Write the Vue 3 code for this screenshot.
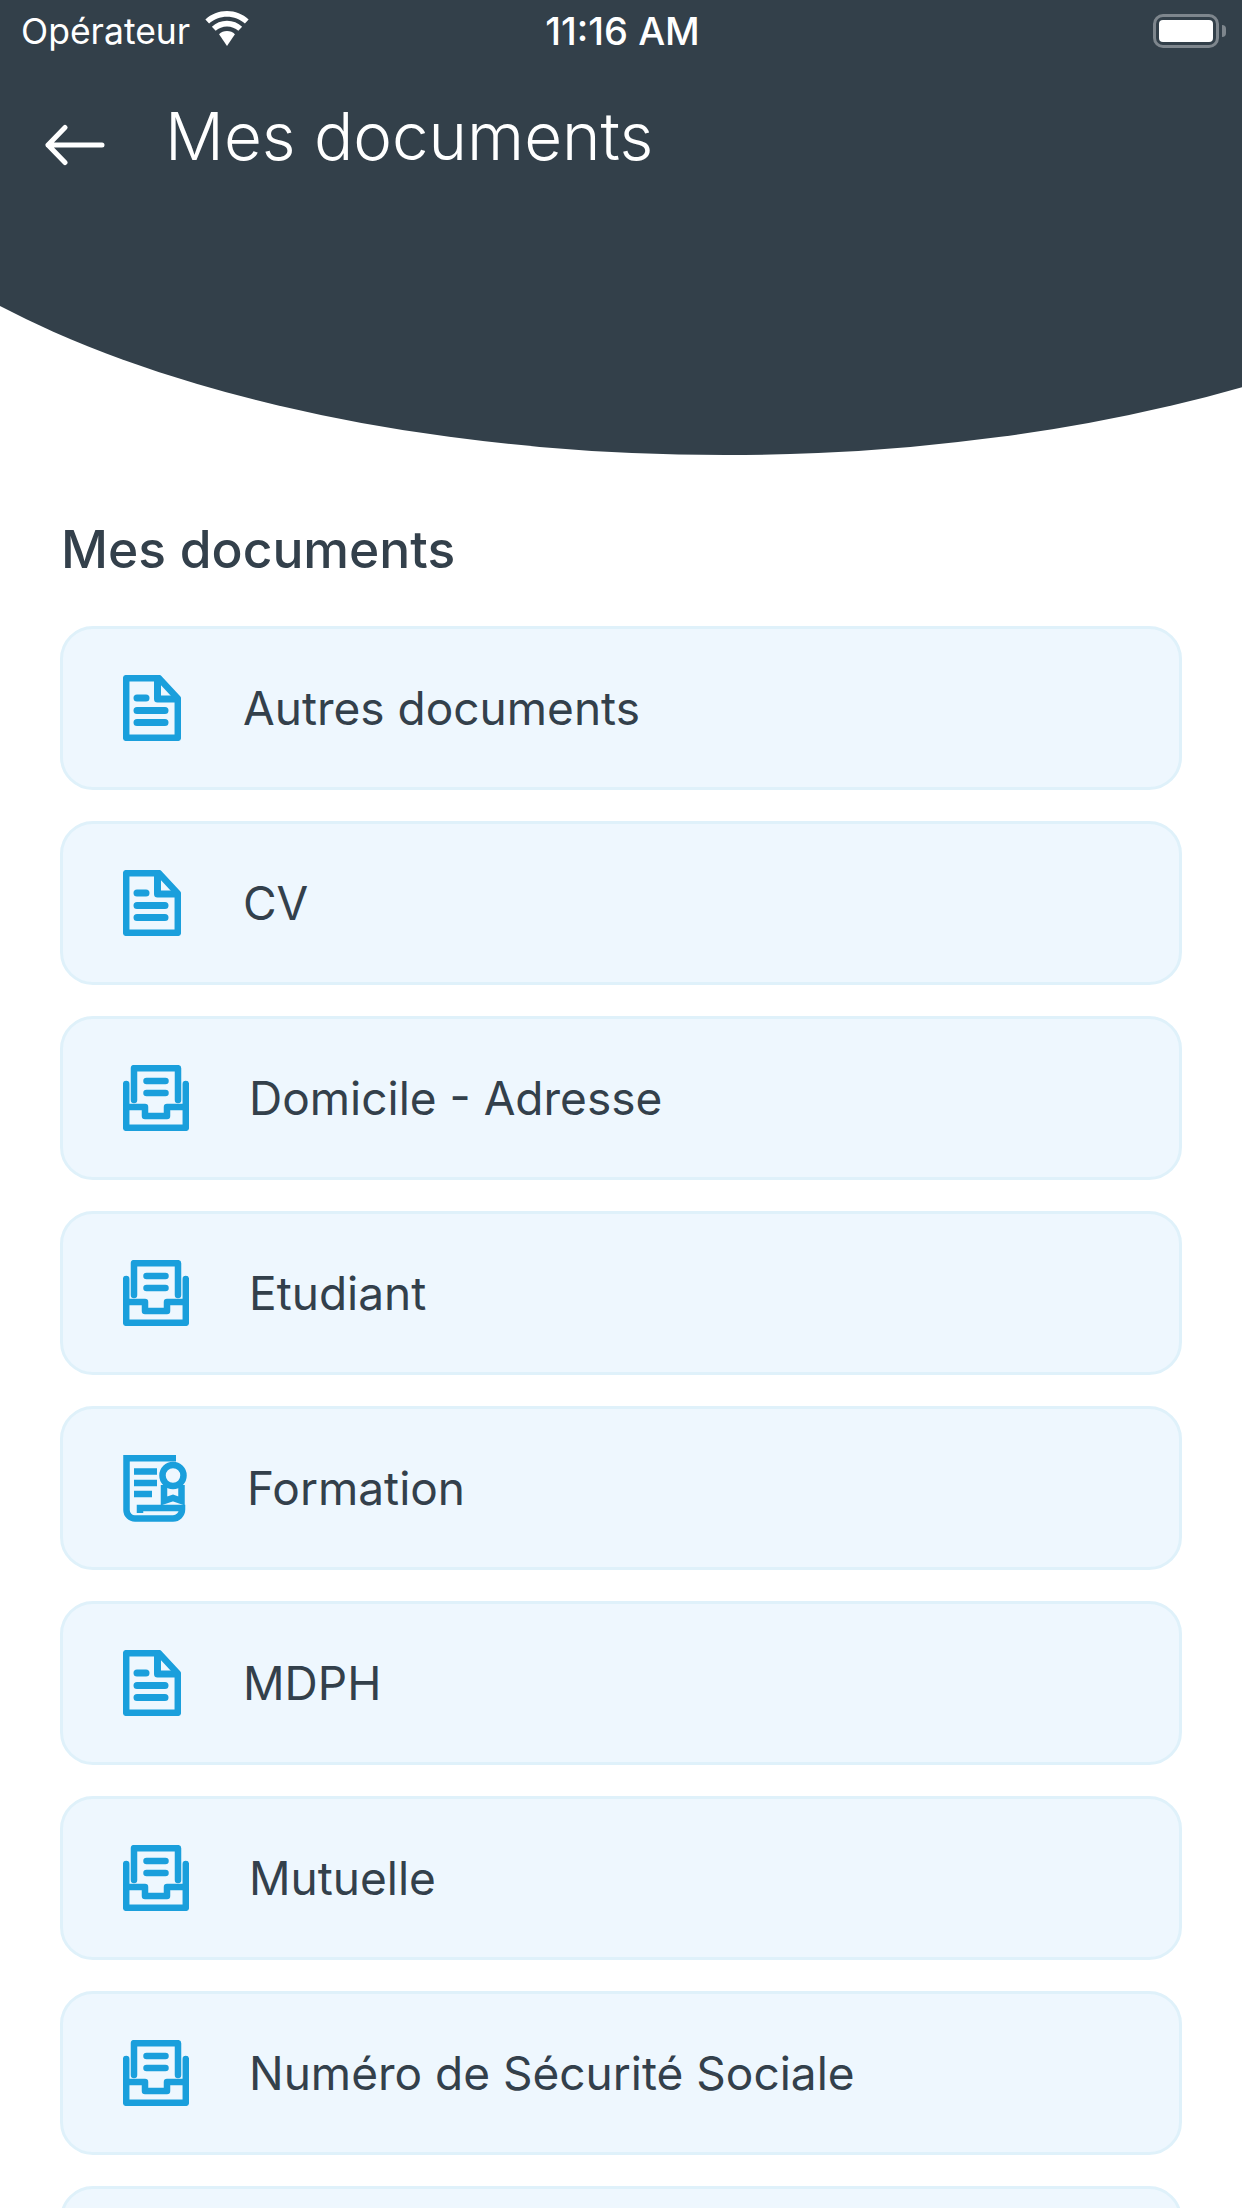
<script setup>
const items = [
  { label: 'Autres documents', icon: 'doc' },
  { label: 'CV', icon: 'doc' },
  { label: 'Domicile - Adresse', icon: 'tray' },
  { label: 'Etudiant', icon: 'tray' },
  { label: 'Formation', icon: 'cert' },
  { label: 'MDPH', icon: 'doc' },
  { label: 'Mutuelle', icon: 'tray' },
  { label: 'Numéro de Sécurité Sociale', icon: 'tray' },
  { label: '', icon: 'tray' },
]
</script>

<template>
  <div class="page">
    <header class="header">
      <svg class="curve" width="1242" height="455" viewBox="0 0 1242 455">
        <ellipse cx="725" cy="34" rx="950" ry="421" fill="#33404a" />
        <rect x="0" y="0" width="1242" height="34" fill="#33404a" />
      </svg>
      <div class="status">
        <div class="status-left">
          <span class="carrier">Opérateur</span>
          <svg class="wifi" width="48" height="35" viewBox="0 0 46 34">
            <path d="M23 5.500c6.600 0 12.700 2.500 17.400 6.700L44 8.200C38.300 3 31 0 23 0S7.700 3 2 8.200l3.600 4c4.700-4.200 10.800-6.700 17.400-6.700z" fill="#fff" />
            <path d="M23 15c4.200 0 8.100 1.600 11 4.200l3.700-4C33.800 11.600 28.700 9.500 23 9.500s-10.800 2.100-14.700 5.700l3.700 4c2.900-2.600 6.800-4.200 11-4.200z" fill="#fff" />
            <path d="M23 19.500c-3 0-5.700 1.100-7.700 3L23 34l7.700-11.500c-2-1.900-4.700-3-7.700-3z" fill="#fff" />
          </svg>
        </div>
        <span class="clock">11:16 AM</span>
        <div class="battery">
          <span class="battery-body"><span class="battery-level"></span></span>
          <span class="battery-nub"></span>
        </div>
      </div>
      <div class="title-row">
        <svg class="back" width="60" height="42" viewBox="0 0 60 42">
          <path d="M3 21H57M20 3.500 3 21l17 17.500" fill="none" stroke="#fff" stroke-width="5" stroke-linecap="round" stroke-linejoin="round" />
        </svg>
        <h1 class="title">Mes documents</h1>
      </div>
    </header>

    <main class="content">
      <h2 class="heading">Mes documents</h2>
      <ul class="list">
        <li v-for="(item, i) in items" :key="i" class="card" :class="'card-' + item.icon">
          <svg v-if="item.icon === 'doc'" class="icon" width="58" height="66" viewBox="0 0 58 66" fill="none" stroke="#1a9fdc" stroke-width="6.500" stroke-linecap="round" stroke-linejoin="round">
            <path d="M3.200 3.200H36L54.800 23.500V62.800H3.200Z" stroke-linecap="butt" />
            <path d="M34.500 4V24H54" stroke-width="7" />
            <path d="M14 23H23M14 35.500H42M14 47.500H42" stroke-width="7" />
          </svg>
          <svg v-else-if="item.icon === 'tray'" class="icon" width="66" height="66" viewBox="0 0 66 66" fill="none" stroke="#1a9fdc" stroke-width="6.500" stroke-linecap="round" stroke-linejoin="round">
            <path d="M11 35V3.200H55V35" />
            <path d="M23.500 16H42.500M23.500 28H42.500" />
            <path d="M3.200 19V62.800H62.800V19" />
            <path d="M3.200 42H22V51H44V42H62.800" />
          </svg>
          <svg v-else class="icon" width="64" height="67" viewBox="0 0 64 67" fill="none" stroke="#1a9fdc" stroke-width="6.500">
            <path d="M53 3.200H3.500V55a8.500 8.500 0 0 0 8.500 8.500H50a9 9 0 0 0 9-9V53H17v5" />
            <path d="M11 16.500H34M11 28H34M11 39H29" />
            <circle cx="50" cy="20.500" r="10.500" />
            <path d="M41 30V46L50 43L58.500 46V30" />
          </svg>
          <span class="label">{{ item.label }}</span>
        </li>
      </ul>
    </main>
  </div>
</template>

<style>
html, body { margin: 0; background: #fff; }
</style>

<style scoped>
.page {
  width: 1242px;
  height: 2208px;
  overflow: hidden;
  background: #fff;
  font-family: Inter, Roboto, "Liberation Sans", sans-serif;
}
.header {
  position: relative;
  height: 455px;
  color: #fff;
}
.curve {
  position: absolute;
  inset: 0;
}
.status {
  position: relative;
  height: 62px;
  padding: 0 16px 0 21px;
  display: grid;
  grid-template-columns: 1fr auto 1fr;
  align-items: center;
}
.status-left {
  display: flex;
  align-items: center;
  gap: 13px;
}
.carrier {
  font-size: 35.500px;
}
.wifi {
  margin-top: -6px;
}
.clock {
  font-size: 38px;
  font-weight: 500;
  margin-left: -2px;
}
.battery {
  justify-self: end;
  display: flex;
  align-items: center;
  gap: 3px;
}
.battery-body {
  box-sizing: border-box;
  width: 66px;
  height: 34px;
  padding: 3px;
  border: 3px solid #7e868d;
  border-radius: 10px;
  display: block;
}
.battery-level {
  display: block;
  height: 100%;
  background: #fff;
  border-radius: 4px;
}
.battery-nub {
  width: 4px;
  height: 12px;
  background: #7e868d;
  border-radius: 0 4px 4px 0;
}
.title-row {
  position: relative;
  display: flex;
  align-items: center;
  padding: 34px 0 0 45px;
}
.back {
  flex: none;
  margin-top: 16px;
}
.title {
  margin: 0 0 0 60px;
  font-size: 65.400px;
  line-height: 82px;
  font-weight: 300;
}
.content {
  padding: 62px 60px 0;
}
.heading {
  margin: 0 0 0 1px;
  font-size: 51.500px;
  line-height: 64px;
  font-weight: 500;
  color: #33404b;
}
.list {
  list-style: none;
  margin: 45px 0 0;
  padding: 0;
  display: flex;
  flex-direction: column;
  gap: 31px;
}
.card {
  box-sizing: border-box;
  height: 164px;
  flex: none;
  display: flex;
  align-items: center;
  padding-left: 60px;
  background: #eef7fe;
  border: 3px solid #dff1fa;
  border-radius: 33px;
}
.icon {
  flex: none;
}
.label {
  font-size: 46px;
  color: #33404b;
}
.card-doc .label { margin-left: 62px; }
.card-tray .label { margin-left: 60px; }
.card-cert .label { margin-left: 60px; }
</style>
